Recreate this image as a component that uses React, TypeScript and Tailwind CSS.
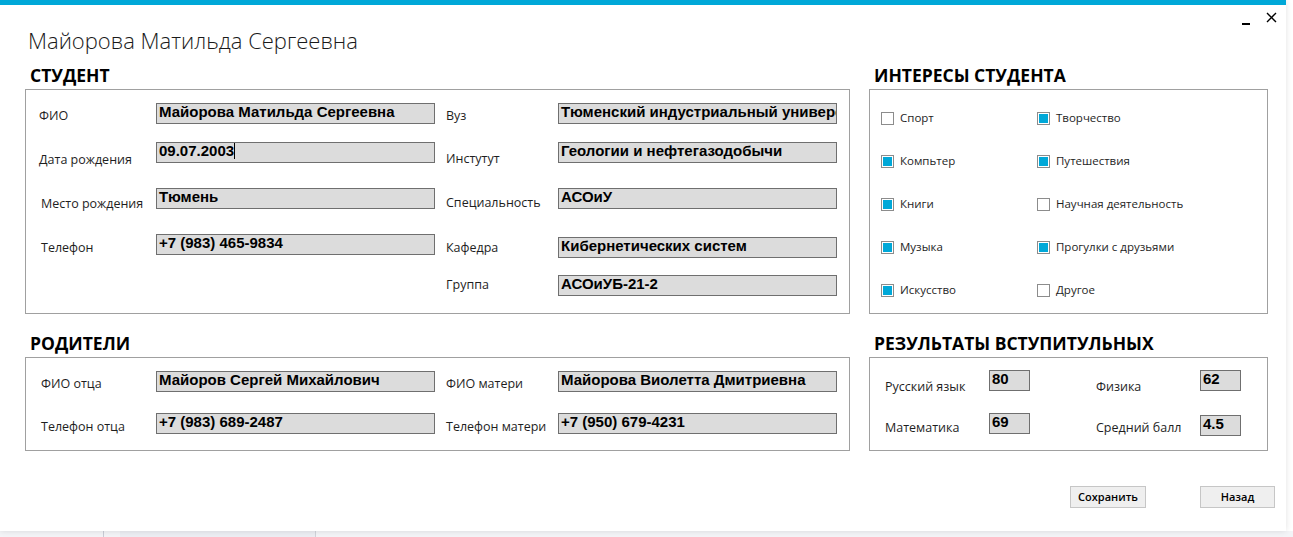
import React from 'react';

const ui = "font-['Open_Sans','Noto_Sans',sans-serif]";
const mono = "font-['Liberation_Sans',Arial,sans-serif]";

function Input({ value, width = 'w-[279px]', caret = false }: { value: string; width?: string; caret?: boolean }) {
  return (
    <div className={`${width} h-[21px] shrink-0 bg-[#dcdcdc] border border-[#6f6f6f] pl-[2px] ${mono} font-bold text-[15px] leading-4 text-black whitespace-nowrap overflow-hidden flex`}>
      <span>{value}</span>
      {caret && <span className="w-px h-[16px] bg-black" />}
    </div>
  );
}

interface FieldProps {
  label: string;
  value: string;
  h: string;
  pt: string;
  labelW: string;
  lx?: string;
  caret?: boolean;
}

function Field({ label, value, h, pt, labelW, lx = '', caret }: FieldProps) {
  return (
    <div className={`flex items-start ${h}`}>
      <div className={`${labelW} ${pt} ${lx} shrink-0 ${ui} text-[12.5px] leading-4 text-[#1e1e1e] whitespace-nowrap`}>{label}</div>
      <Input value={value} caret={caret} />
    </div>
  );
}

function Heading({ children }: { children: React.ReactNode }) {
  return <div className={`${ui} font-bold text-[17.5px] leading-[22px] text-black pl-[5px] h-[25px]`}>{children}</div>;
}

function Check({ label, checked }: { label: string; checked: boolean }) {
  return (
    <div className="flex items-center gap-[6px]">
      <div className="w-[13px] h-[13px] border border-[#8c8c8c] bg-white p-[1px]">
        {checked && <div className="w-full h-full bg-[#00a8d8]" />}
      </div>
      <span className={`${ui} text-[11.5px] leading-4 text-[#1e1e1e] whitespace-nowrap`}>{label}</span>
    </div>
  );
}

function Score({ label, value, pt, h }: { label: string; value: string; pt: string; h: string }) {
  return (
    <div className={`flex items-start ${h}`}>
      <div className={`w-[104px] ${pt} ${ui} text-[12.5px] leading-4 text-[#1e1e1e] whitespace-nowrap`}>{label}</div>
      <Input value={value} width="w-[41px]" />
    </div>
  );
}

export default function App() {
  return (
    <div className="w-[1293px] h-[537px] bg-white overflow-hidden flex flex-col">
      <div className="flex">
        <div className="w-[1286px] h-[531px] bg-white border-t-[5px] border-[#00a8d8] shadow-[0_0_6px_rgba(0,0,0,0.12)] relative flex flex-col pl-[25px]">
          {/* window controls */}
          <div className="absolute right-[9px] top-[5px] flex items-center gap-[16px] text-black">
            <div className="w-[8px] h-[2px] bg-black mt-[13px]" />
            <svg width="11" height="11" viewBox="0 0 11 11">
              <path d="M1 1 L10 10 M10 1 L1 10" stroke="black" strokeWidth="1.4" />
            </svg>
          </div>

          <div className={`${ui} font-light text-[22px] leading-[30px] text-[#1a1a1a] pl-[3px] pt-[20px] h-[59px]`}>Майорова Матильда Сергеевна</div>

          <div className="flex gap-[19px]">
            {/* left column */}
            <div className="w-[825px] flex flex-col">
              <Heading>СТУДЕНТ</Heading>
              <div className="h-[225px] border border-[#a0a0a0] flex pt-[13px] pl-[13px]">
                <div className="w-[407px] flex flex-col">
                  <Field label="ФИО" value="Майорова Матильда Сергеевна" h="h-[39px]" pt="pt-[5px]" labelW="w-[117px]" />
                  <Field label="Дата рождения" value="09.07.2003" h="h-[46px]" pt="pt-[10px]" labelW="w-[117px]" caret />
                  <Field label="Место рождения" value="Тюмень" h="h-[46px]" pt="pt-[8px]" labelW="w-[117px]" lx="pl-[2px]" />
                  <Field label="Телефон" value="+7 (983) 465-9834" h="h-[40px]" pt="pt-[6px]" labelW="w-[117px]" lx="pl-[2px]" />
                </div>
                <div className="flex flex-col">
                  <Field label="Вуз" value="Тюменский индустриальный университет" h="h-[39px]" pt="pt-[5px]" labelW="w-[112px]" />
                  <Field label="Инстутут" value="Геологии и нефтегазодобычи" h="h-[46px]" pt="pt-[9px]" labelW="w-[112px]" />
                  <Field label="Специальность" value="АСОиУ" h="h-[49px]" pt="pt-[7px]" labelW="w-[112px]" />
                  <Field label="Кафедра" value="Кибернетических систем" h="h-[38px]" pt="pt-[3px]" labelW="w-[112px]" />
                  <Field label="Группа" value="АСОиУБ-21-2" h="h-[30px]" pt="pt-[2px]" labelW="w-[112px]" />
                </div>
              </div>

              <div className="h-[18px]" />
              <Heading>РОДИТЕЛИ</Heading>
              <div className="h-[94px] border border-[#a0a0a0] flex pt-[13px] pl-[15px]">
                <div className="w-[405px] flex flex-col">
                  <Field label="ФИО отца" value="Майоров Сергей Михайлович" h="h-[42px]" pt="pt-[5px]" labelW="w-[115px]" />
                  <Field label="Телефон отца" value="+7 (983) 689-2487" h="h-[30px]" pt="pt-[6px]" labelW="w-[115px]" />
                </div>
                <div className="flex flex-col">
                  <Field label="ФИО матери" value="Майорова Виолетта Дмитриевна" h="h-[42px]" pt="pt-[5px]" labelW="w-[112px]" />
                  <Field label="Телефон матери" value="+7 (950) 679-4231" h="h-[30px]" pt="pt-[6px]" labelW="w-[112px]" />
                </div>
              </div>
            </div>

            {/* right column */}
            <div className="w-[399px] flex flex-col">
              <Heading>ИНТЕРЕСЫ СТУДЕНТА</Heading>
              <div className="h-[225px] border border-[#a0a0a0] pl-[11px] pt-[20px]">
                <div className="grid grid-cols-[156px_1fr] gap-y-[27px]">
                  <Check label="Спорт" checked={false} />
                  <Check label="Творчество" checked />
                  <Check label="Компьтер" checked />
                  <Check label="Путешествия" checked />
                  <Check label="Книги" checked />
                  <Check label="Научная деятельность" checked={false} />
                  <Check label="Музыка" checked />
                  <Check label="Прогулки с друзьями" checked />
                  <Check label="Искусство" checked />
                  <Check label="Другое" checked={false} />
                </div>
              </div>

              <div className="h-[18px]" />
              <Heading>РЕЗУЛЬТАТЫ ВСТУПИТУЛЬНЫХ</Heading>
              <div className="h-[94px] border border-[#a0a0a0] flex pt-[12px] pl-[15px]">
                <div className="w-[211px] flex flex-col">
                  <Score label="Русский язык" value="80" h="h-[43px]" pt="pt-[9px]" />
                  <Score label="Математика" value="69" h="h-[30px]" pt="pt-[7px]" />
                </div>
                <div className="flex flex-col">
                  <Score label="Физика" value="62" h="h-[45px]" pt="pt-[9px]" />
                  <Score label="Средний балл" value="4.5" h="h-[30px]" pt="pt-[5px]" />
                </div>
              </div>
            </div>
          </div>

          <div className="flex justify-end gap-[54px] pr-[11px] mt-[35px]">
            <button className={`w-[76px] h-[22px] bg-[#efefef] border border-[#c6c6c6] ${ui} font-semibold text-[11px] text-black`}>Сохранить</button>
            <button className={`w-[75px] h-[22px] bg-[#efefef] border border-[#c6c6c6] ${ui} font-semibold text-[11px] text-black`}>Назад</button>
          </div>
        </div>
        <div className="flex-1 bg-white" />
      </div>
      <div className="flex-1 flex bg-[#f3f4f7]">
        <div className="w-[104px] border-r border-[#c9ccd6]" />
        <div className="w-[16px]" />
        <div className="w-[196px] bg-[#eceef3] border-r border-[#d0d3da]" />
      </div>
    </div>
  );
}
